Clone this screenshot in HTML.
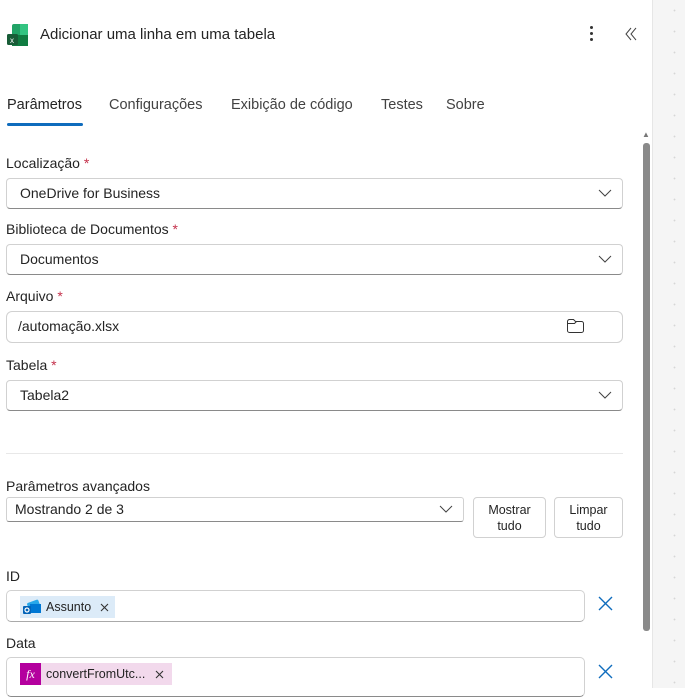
<!DOCTYPE html>
<html><head><meta charset="utf-8"><style>
*{box-sizing:border-box;margin:0;padding:0}
body{width:685px;height:688px;overflow:hidden;background:#fff;font-family:"Liberation Sans",sans-serif;color:#242424;position:relative}
.abs{position:absolute}
.strip{left:652px;top:0;width:33px;height:688px;background:#f5f5f5;border-left:1px solid #e6e6e6;
background-image:radial-gradient(circle,#d6d6d6 0.7px,transparent 1.1px);background-size:33px 21px;background-position:5px 0}
.lbl{font-size:14px;color:#242424;left:6px}
.req{color:#c4314b}
.field{left:6px;width:617px;height:31px;border:1px solid #d1d1d1;border-bottom-color:#8a8a8a;border-radius:4px;font-size:14px;padding:0 13px;line-height:29px}
.chev{position:absolute;right:10px;top:9px}
.tab{top:97px;font-size:14.5px;color:#424242}
.btn{height:41px;border:1px solid #d1d1d1;border-radius:4px;font-size:12.5px;text-align:center;line-height:16px;padding-top:4px;color:#242424}
</style></head><body>
<div class="abs strip"></div>
<div class="abs" style="left:643px;top:143px;width:7px;height:488px;background:#8a8a8a;border-radius:3px"></div>
<div class="abs" style="left:642px;top:130px;font-size:8px;color:#777">▲</div>

<svg class="abs" style="left:6px;top:23px" width="24" height="24" viewBox="0 0 24 24">
<rect x="6" y="1" width="16" height="22" rx="2" fill="#21a366"/>
<rect x="14" y="1" width="8" height="11" fill="#33c481"/>
<rect x="6" y="12" width="16" height="11" fill="#107c41"/>
<rect x="1" y="11" width="11" height="11" rx="1.5" fill="#185c37"/>
<text x="4" y="20" font-size="8" fill="#fff" font-family="Liberation Sans">x</text>
</svg>
<div class="abs" style="left:40px;top:26px;font-size:15px;color:#242424">Adicionar uma linha em uma tabela</div>
<div class="abs" style="left:590px;top:26px;width:4px">
<div style="width:3px;height:3px;background:#333;border-radius:50%;margin-bottom:3px"></div>
<div style="width:3px;height:3px;background:#333;border-radius:50%;margin-bottom:3px"></div>
<div style="width:3px;height:3px;background:#333;border-radius:50%"></div></div>
<svg class="abs" style="left:624px;top:27px" width="14" height="14" viewBox="0 0 14 14"><path d="M7 1L2 7l5 6M12 1L7 7l5 6" fill="none" stroke="#444" stroke-width="1"/></svg>

<div class="abs tab" style="left:7px;color:#242424">Parâmetros</div>
<div class="abs tab" style="left:109px">Configurações</div>
<div class="abs tab" style="left:231px">Exibição de código</div>
<div class="abs tab" style="left:381px">Testes</div>
<div class="abs tab" style="left:446px">Sobre</div>
<div class="abs" style="left:7px;top:123px;width:76px;height:3px;background:#0f6cbd;border-radius:2px"></div>

<div class="abs lbl" style="top:155px">Localização <span class="req">*</span></div>
<div class="abs field" style="top:178px">OneDrive for Business<svg class="chev" width="14" height="10"><path d="M1 2l6 6 6-6" fill="none" stroke="#424242"/></svg></div>
<div class="abs lbl" style="top:221px">Biblioteca de Documentos <span class="req">*</span></div>
<div class="abs field" style="top:244px">Documentos<svg class="chev" width="14" height="10"><path d="M1 2l6 6 6-6" fill="none" stroke="#424242"/></svg></div>
<div class="abs lbl" style="top:288px">Arquivo <span class="req">*</span></div>
<div class="abs field" style="top:311px;height:32px;border-bottom-color:#d1d1d1;border-radius:6px;padding-left:11px">/automação.xlsx
<svg style="position:absolute;left:559px;top:6px" width="20" height="16" viewBox="0 0 20 16"><path d="M1.5 3.5a2 2 0 012-2h4l2 2h6a2 2 0 012 2v7a2 2 0 01-2 2h-12a2 2 0 01-2-2z M1.5 5.5h7l2-2" fill="none" stroke="#333" stroke-width="1"/></svg></div>
<div class="abs lbl" style="top:357px">Tabela <span class="req">*</span></div>
<div class="abs field" style="top:380px">Tabela2<svg class="chev" width="14" height="10"><path d="M1 2l6 6 6-6" fill="none" stroke="#424242"/></svg></div>

<div class="abs" style="left:6px;top:453px;width:617px;height:1px;background:#e8e8e8"></div>
<div class="abs lbl" style="top:478px">Parâmetros avançados</div>
<div class="abs field" style="top:497px;width:458px;height:25px;line-height:23px;padding-left:8px;border-bottom-color:#8a8a8a;border-radius:3px">Mostrando 2 de 3<svg class="chev" style="top:6px" width="14" height="10"><path d="M1 2l6 6 6-6" fill="none" stroke="#424242"/></svg></div>
<div class="abs btn" style="left:473px;top:497px;width:73px">Mostrar<br>tudo</div>
<div class="abs btn" style="left:554px;top:497px;width:69px">Limpar<br>tudo</div>

<div class="abs lbl" style="top:568px">ID</div>
<div class="abs field" style="top:590px;width:579px;height:32px;border-bottom-color:#aaa;border-radius:5px;padding:5px 13px">
<div style="display:inline-flex;align-items:center;height:22px;background:#dcebf8;font-size:12.5px;padding:0 6px 0 2px;vertical-align:top;line-height:22px">
<svg width="20" height="18" viewBox="0 0 20 18"><rect x="6" y="3" width="12" height="9" rx="1.5" fill="#28a8ea" transform="rotate(-20 12 8)"/><rect x="8" y="6" width="11" height="9" fill="#0078d4"/><rect x="1" y="8" width="8" height="8" rx="1" fill="#0364b8"/><circle cx="5" cy="12" r="2" fill="none" stroke="#fff" stroke-width="1.2"/></svg>
<span style="margin-left:4px">Assunto</span><svg style="margin-left:9px" width="9" height="9"><path d="M1 1l7 7M8 1L1 8" stroke="#333" stroke-width="1.1"/></svg></div></div>
<svg class="abs" style="left:598px;top:596px" width="15" height="15"><path d="M1 1l13 13M14 1L1 14" stroke="#0f6cbd" stroke-width="1.4"/></svg>

<div class="abs lbl" style="top:635px">Data</div>
<div class="abs field" style="top:657px;width:579px;height:40px;border-radius:5px;padding:5px 13px">
<div style="display:inline-flex;align-items:center;height:22px;background:#f2d9ec;font-size:12.5px;padding:0 8px 0 0;vertical-align:top;line-height:22px">
<span style="display:inline-block;width:21px;height:22px;background:#b4009e;color:#fff;font-family:'Liberation Serif',serif;font-style:italic;font-size:12px;text-align:center">fx</span>
<span style="margin-left:5px">convertFromUtc...</span><svg style="margin-left:10px" width="9" height="9"><path d="M1 1l7 7M8 1L1 8" stroke="#333" stroke-width="1.1"/></svg></div></div>
<svg class="abs" style="left:598px;top:664px" width="15" height="15"><path d="M1 1l13 13M14 1L1 14" stroke="#0f6cbd" stroke-width="1.4"/></svg>
</body></html>
